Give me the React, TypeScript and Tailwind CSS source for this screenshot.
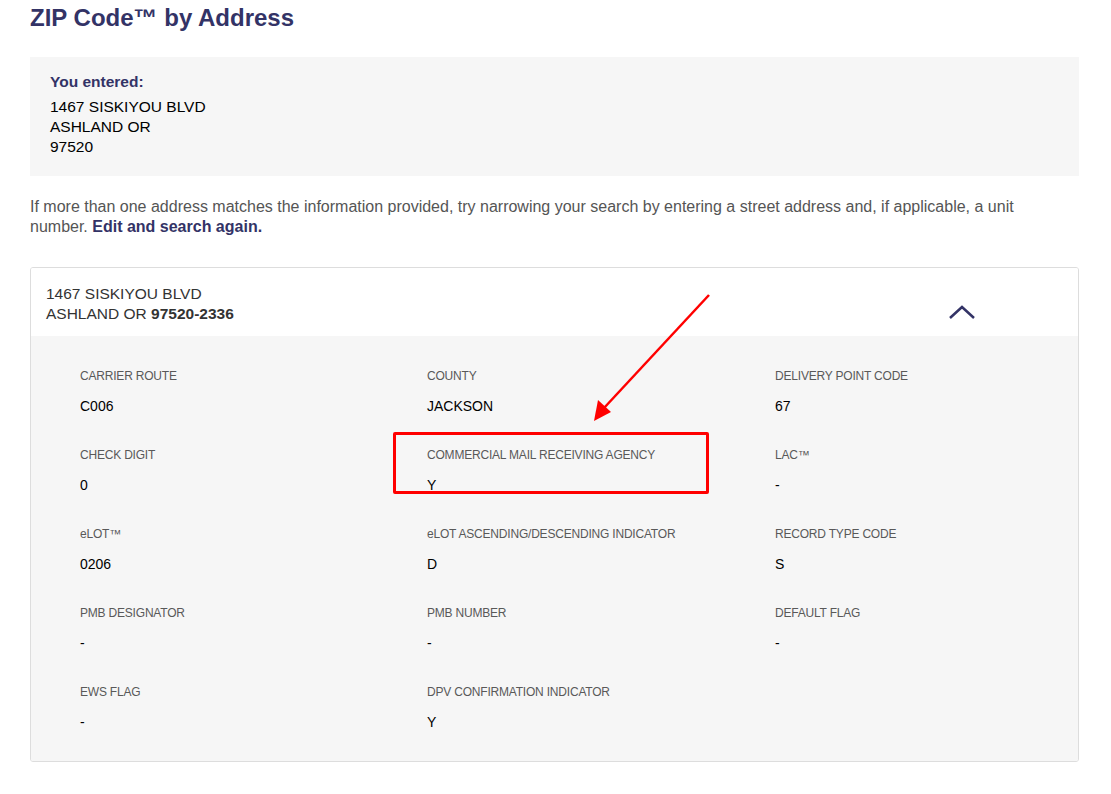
import React from 'react';

const fields: { label: string; value: string }[] = [
  { label: 'CARRIER ROUTE', value: 'C006' },
  { label: 'COUNTY', value: 'JACKSON' },
  { label: 'DELIVERY POINT CODE', value: '67' },
  { label: 'CHECK DIGIT', value: '0' },
  { label: 'COMMERCIAL MAIL RECEIVING AGENCY', value: 'Y' },
  { label: 'LAC™', value: '-' },
  { label: 'eLOT™', value: '0206' },
  { label: 'eLOT ASCENDING/DESCENDING INDICATOR', value: 'D' },
  { label: 'RECORD TYPE CODE', value: 'S' },
  { label: 'PMB DESIGNATOR', value: '-' },
  { label: 'PMB NUMBER', value: '-' },
  { label: 'DEFAULT FLAG', value: '-' },
  { label: 'EWS FLAG', value: '-' },
  { label: 'DPV CONFIRMATION INDICATOR', value: 'Y' },
];

const Field: React.FC<{ label: string; value: string; highlight?: boolean }> = ({ label, value, highlight }) => (
  <div className="relative">
    {highlight && (
      <div className="absolute left-[-34px] top-[-13px] w-[316px] h-[62px] border-[3px] border-[#ff0000] rounded-[2px]" />
    )}
    <div className="text-[12px] leading-5 text-[#595959] tracking-[-0.2px]">{label}</div>
    <div className="mt-[10px] text-[14px] leading-5 text-black">{value}</div>
  </div>
);

export default function App() {
  return (
    <div className="relative min-h-[794px] bg-white px-[30px] pb-8 font-['Liberation_Sans',Arial,sans-serif] text-[#333]">
      <h1 className="pt-[4px] text-[24px] leading-[28px] font-bold text-[#333366]">ZIP Code™ by Address</h1>

      {/* You entered */}
      <div className="mt-[25px] w-[1049px] bg-[#f6f6f6] px-5 pt-[15px] pb-[19px] text-[15.5px] leading-5 text-black">
        <div className="font-bold text-[#333366] mb-[5px]">You entered:</div>
        <div>1467 SISKIYOU BLVD</div>
        <div>ASHLAND OR</div>
        <div>97520</div>
      </div>

      <p className="mt-[21px] w-[1030px] text-[16px] leading-5 text-[#555]">
        If more than one address matches the information provided, try narrowing your search by entering a street address and, if applicable, a unit
        number. <span className="font-bold text-[#333366]">Edit and search again.</span>
      </p>

      {/* Result card */}
      <div className="mt-[30px] w-[1049px] rounded-[3px] border border-[#dddddd] overflow-hidden">
        <div className="flex items-center justify-between bg-white pl-[15px] pr-[102px] pt-[3px] h-[68px] text-[15.5px] leading-5 text-[#333]">
          <div>
            <div>1467 SISKIYOU BLVD</div>
            <div>
              ASHLAND OR <span className="font-bold">97520-2336</span>
            </div>
          </div>
          <svg width="28" height="16" viewBox="0 0 28 16" className="mt-[17px]">
            <path d="M2 14 L14 3 L26 14" fill="none" stroke="#333366" strokeWidth="2.5" />
          </svg>
        </div>
        <div className="grid grid-cols-[347px_348px_1fr] gap-y-[29px] bg-[#f6f6f6] pl-[49px] pt-[30px] pb-[29px]">
          {fields.map((f) => (
            <Field key={f.label} label={f.label} value={f.value} highlight={f.label.startsWith('COMMERCIAL')} />
          ))}
        </div>
      </div>

      {/* annotation arrow */}
      <svg className="absolute left-0 top-0 pointer-events-none" width="1111" height="794">
        <line x1="709" y1="295" x2="604" y2="408" stroke="#ff0000" strokeWidth="2.5" />
        <polygon points="594,421 598,400 611,412" fill="#ff0000" />
      </svg>
    </div>
  );
}
